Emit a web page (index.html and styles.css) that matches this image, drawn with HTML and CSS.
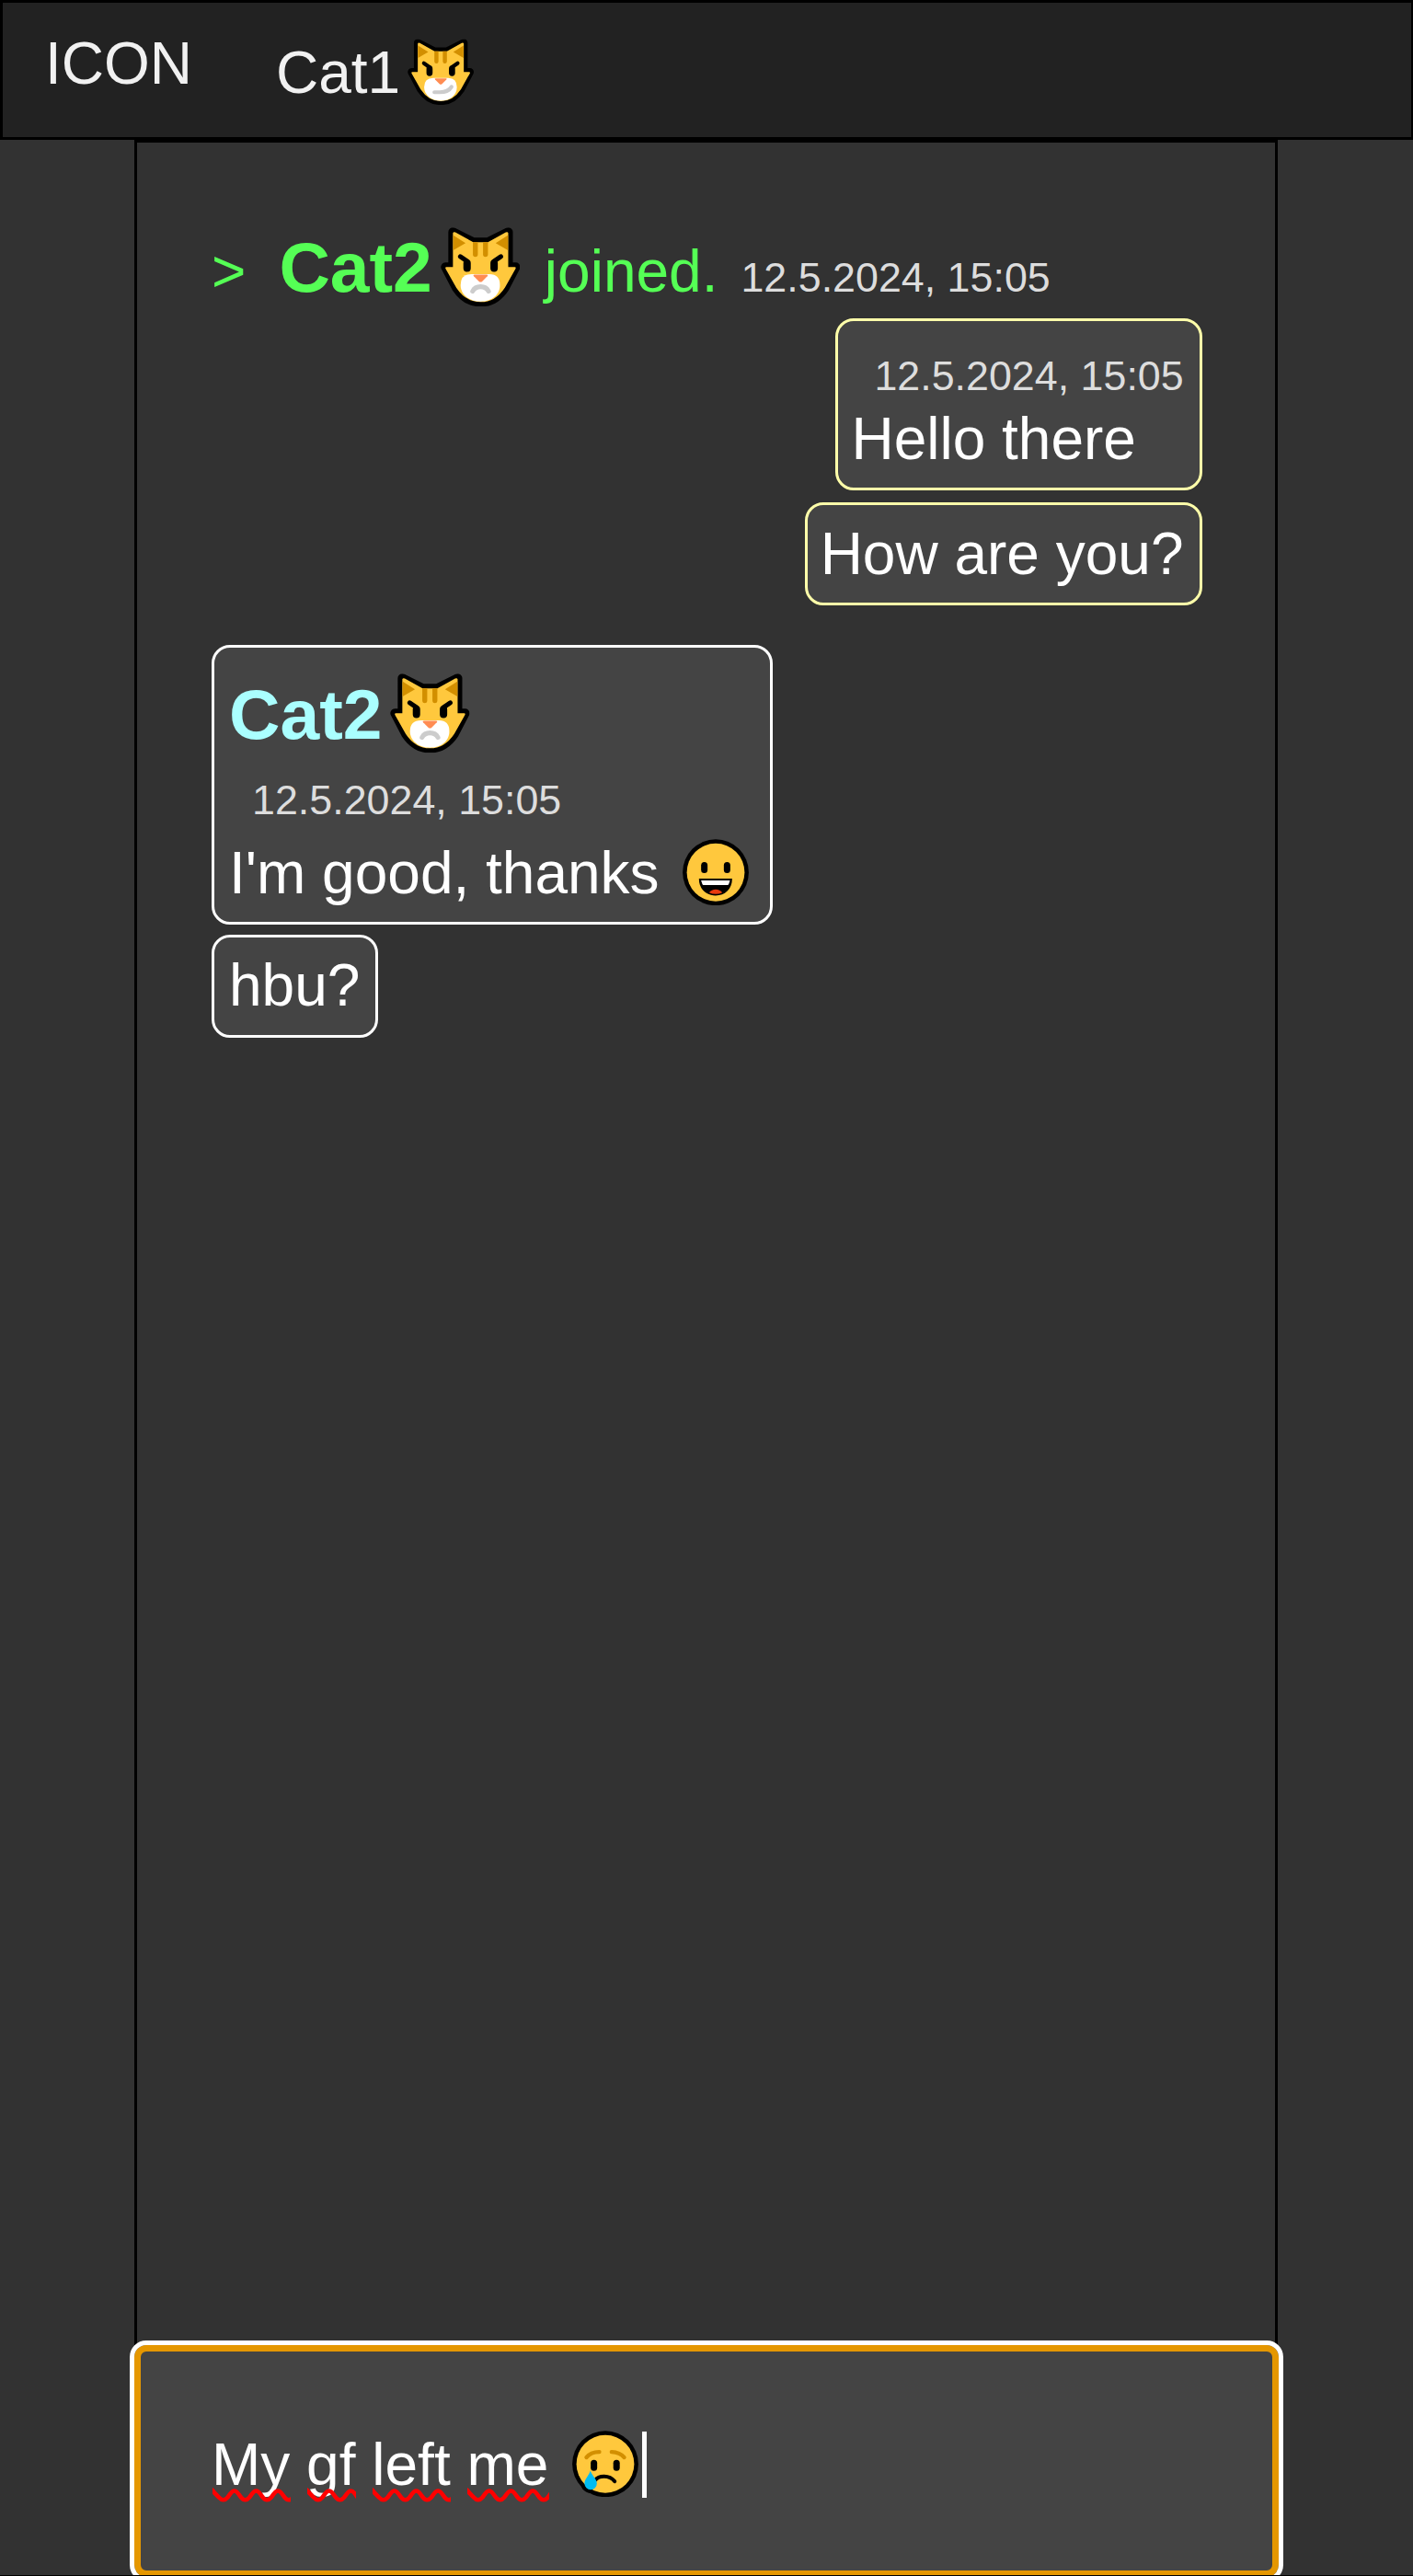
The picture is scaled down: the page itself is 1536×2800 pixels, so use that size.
FILE: index.html
```
<!DOCTYPE html>
<html lang="en">
<head>
<meta charset="utf-8">
<title>Chat</title>
<link rel="stylesheet" href="styles.css">
</head>
<body>
<svg class="defs" width="0" height="0" aria-hidden="true">
  <symbol id="cat" viewBox="28 36 259 258">
    <path id="cat-shape" d="M68 51 L134 84 H182 L248 51 V165 H272 L237 232 Q206 279 158 279 Q110 279 79 232 L44 165 H68 Z" fill="#000" stroke="#000" stroke-width="30" stroke-linejoin="round"/>
    <path d="M68 54 Q70 49 76 52 L134 84 H182 L240 52 Q246 49 248 54 V165 H269 Q274 165 272 170 L237 232 Q206 279 158 279 Q110 279 79 232 L44 170 Q42 165 47 165 H68 Z" fill="#ffc83d"/>
    <path d="M69 62 L109 87 L69 110 Z M247 62 L207 87 L247 110 Z" fill="#d28f00"/>
    <path d="M133 84 H149 V124 A8 8 0 0 1 133 124 Z M166 84 H182 V124 A8 8 0 0 1 166 124 Z" fill="#d28f00"/>
    <path d="M92 131 L114 146 V169 M224 131 L202 146 V169" fill="none" stroke="#000" stroke-linecap="round" stroke-linejoin="round" stroke-width="15"/>
    <path d="M114 152 V169 M202 152 V169" fill="none" stroke="#000" stroke-linecap="round" stroke-width="24"/>
    <path d="M129 188 H187 Q221 188 221 224 C221 256 193 277 158 277 C123 277 93 256 93 224 Q93 188 129 188 Z" fill="#fff"/>
    <path d="M138 190 H178 Q184 190 180 195 L163 212 Q158 216 153 212 L136 195 Q132 190 138 190 Z" fill="#ff8c52"/>
  </symbol>
</svg>

<header class="topbar">
  <div class="logo">ICON</div>
  <div class="user">Cat1<svg class="emoji" viewBox="28 36 259 258" role="img" aria-label="Smirking cat"><use href="#cat" x="28" y="36" width="259" height="258"/><path class="mouth" d="M133 244 H154 Q188 244 200 223"/></svg></div>
</header>

<main class="chat">
  <div class="notice">
    <span class="arrow">&gt;</span>
    <span class="name">Cat2<svg class="emoji" viewBox="28 36 259 258" role="img" aria-label="Pouting cat"><use href="#cat" x="28" y="36" width="259" height="258"/><path class="mouth" d="M132 244 C142 224 174 224 184 244"/></svg></span>
    <span class="action">joined.</span>
    <time class="time">12.5.2024, 15:05</time>
  </div>

  <div class="bubble own first">
    <time class="time">12.5.2024, 15:05</time>
    <p class="text">Hello there</p>
  </div>
  <div class="bubble own"><p class="text">How are you?</p></div>

  <div class="bubble other first">
    <div class="name">Cat2<svg class="emoji" viewBox="28 36 259 258" role="img" aria-label="Pouting cat"><use href="#cat" x="28" y="36" width="259" height="258"/><path class="mouth" d="M132 244 C142 224 174 224 184 244"/></svg></div>
    <time class="time">12.5.2024, 15:05</time>
    <p class="text">I'm good, thanks <svg class="emoji" viewBox="38 36 215 217" role="img" aria-label="Grinning face">
      <circle cx="145.5" cy="144.5" r="107.5" fill="#000"/>
      <circle cx="145.5" cy="144.5" r="94" fill="#ffc83d"/>
      <rect x="98" y="111" width="21" height="36" rx="10.5" fill="#000"/>
      <rect x="172" y="111" width="21" height="36" rx="10.5" fill="#000"/>
      <path d="M91 165 H199 C199 200 175 220 145 220 C115 220 91 200 91 165 Z" fill="#000"/>
      <path d="M98 171 H192 L188 183 Q187 186 184 186 H106 Q103 186 102 183 Z" fill="#fff"/>
      <path d="M124 210 C133 196 158 196 167 210 Q146 219 124 210 Z" fill="#e8390e"/>
    </svg></p>
  </div>
  <div class="bubble other"><p class="text">hbu?</p></div>
</main>

<div class="composer">
  <div class="draft"><span class="word">My<svg class="squiggle" aria-hidden="true"><use href="#wave"/></svg></span> <span class="word">gf<svg class="squiggle" aria-hidden="true"><use href="#wave"/></svg></span> <span class="word">left<svg class="squiggle" aria-hidden="true"><use href="#wave"/></svg></span> <span class="word">me<svg class="squiggle" aria-hidden="true"><use href="#wave"/></svg></span> <svg class="emoji" viewBox="38 36 215 217" role="img" aria-label="Crying face">
      <circle cx="145.5" cy="144.5" r="107.5" fill="#000"/>
      <circle cx="98" cy="207" r="32" fill="#000"/>
      <circle cx="145.5" cy="144.5" r="94" fill="#ffc83d"/>
      <rect x="98" y="131" width="21" height="36" rx="10.5" fill="#000"/>
      <rect x="171.500" y="131" width="21" height="36" rx="10.5" fill="#000"/>
      <path d="M84 123 Q98 105 126 105 M166 105 Q193 106 207 123" fill="none" stroke="#d28f00" stroke-width="13" stroke-linecap="round"/>
      <path d="M112 198 C125 181 158 180 176 201" fill="none" stroke="#000" stroke-width="12" stroke-linecap="round"/>
      <path d="M97 166 C103 185 118 192 118 208 A20 20 0 0 1 78 208 C78 192 91 185 97 166 Z" fill="#00bcf2"/>
    </svg><span class="caret"></span></div>
</div>

<svg class="defs" width="0" height="0" aria-hidden="true">
  <path id="wave" d="M-2 1 L0 3 Q1 4 2 5.500 L7 10.500 Q11.800 16 16.500 10.500 L19.500 6.500 Q23.700 0.500 28 6.500 L31 10.500 Q35.500 16 40.200 10.500 L43.200 6.500 Q47.400 0.500 51.700 6.500 L54.700 10.500 Q59.200 16 63.900 10.500 L66.900 6.500 Q71.100 0.500 75.400 6.500 L78.400 10.500 Q82.900 16 87.600 10.500 L91 6" fill="none" stroke="#f00" stroke-width="4.6"/>
</svg>
</body>
</html>
```

FILE: styles.css
```
* {
  box-sizing: border-box;
}

body {
  margin: 0;
  height: 2800px;
  display: flex;
  flex-direction: column;
  overflow: hidden;
  background: #323232;
  color: #fff;
  font: 64px/80px "Liberation Sans", Arial, sans-serif;
}

body::after {
  content: "";
  position: absolute;
  top: 2799px;
  left: 0;
  right: 0;
  height: 1px;
  background: #000;
}

.defs {
  position: absolute;
}

.emoji {
  width: 72px;
  height: 72.5px;
  margin: 0 8px 0 7.500px;
  vertical-align: -13.600px;
}

.mouth {
  fill: none;
  stroke: #ccc;
  stroke-width: 15;
  stroke-linecap: round;
}

.topbar {
  display: flex;
  flex: none;
  height: 152px;
  padding: 26px 46px 0;
  gap: 91px;
  border: 3px solid #000;
  border-right-width: 2.500px;
  background: #222;
  color: #f1f1f1;
}

.user {
  padding-top: 10px;
}

.chat {
  flex: 1;
  display: flex;
  flex-direction: column;
  margin: 0 147px 0 146px;
  padding: 85px 79px 0 80px;
  border: 3px solid #000;
  border-bottom: 0;
}

.name {
  font-size: 76.8px;
  font-weight: bold;
  line-height: 100px;
}

.name .emoji {
  width: 86.5px;
  height: 86.5px;
  margin: 0 9px 0 9px;
  vertical-align: -16.300px;
}

.time {
  margin: 0 4.300px 0 25px;
  font-size: 44.8px;
  line-height: 56px;
  color: #ddd;
}

.notice {
  display: flex;
  align-items: baseline;
  height: 100px;
  margin: 0 0 6px 1px;
  color: #5f5;
}

.arrow {
  margin-right: 36px;
}

.action {
  margin-left: 17.500px;
}

.bubble {
  display: flex;
  flex-direction: column;
  flex: none;
  border: 3px solid;
  border-radius: 20px;
  background: #444;
}

.text {
  margin: 0;
  white-space: nowrap;
  color: #fff;
}

.own {
  align-self: flex-end;
  height: 112px;
  padding: 13px 13px 0 14px;
  border-color: #ffa;
}

.own .text {
  padding-right: 4.500px;
}

.own.first {
  height: 187px;
  margin-bottom: 13px;
  padding-top: 31px;
}

.own.first .text {
  margin-top: 1px;
}

.other {
  align-self: flex-start;
  height: 112px;
  margin-left: 0.500px;
  padding: 12px 17px 0 16.500px;
  border-color: #fff;
}

.other.first {
  height: 304px;
  margin-top: 43px;
  margin-bottom: 11px;
  padding-top: 21.500px;
  padding-right: 15.500px;
}

.other .name {
  color: #aff;
}

.other .time {
  margin-top: 15.500px;
  margin-bottom: 11.500px;
}

.composer {
  flex: none;
  height: 252px;
  margin: 0 146px -0.500px 146px;
  padding: 83px 77px 0;
  border: 7px solid #e59700;
  border-radius: 13px;
  outline: 5px solid #fff;
  background: #444;
}

.draft {
  display: flex;
  white-space: pre;
}

.word {
  position: relative;
  margin-right: 17.800px;
}

.squiggle {
  position: absolute;
  left: 0.500px;
  top: 65.500px;
  width: 100%;
  height: 16px;
  overflow: hidden;
}

.draft .emoji {
  margin: 3px 4px 0 7.500px;
}

.caret {
  width: 5px;
  height: 72px;
  margin-top: 4px;
  background: #fff;
}
```
